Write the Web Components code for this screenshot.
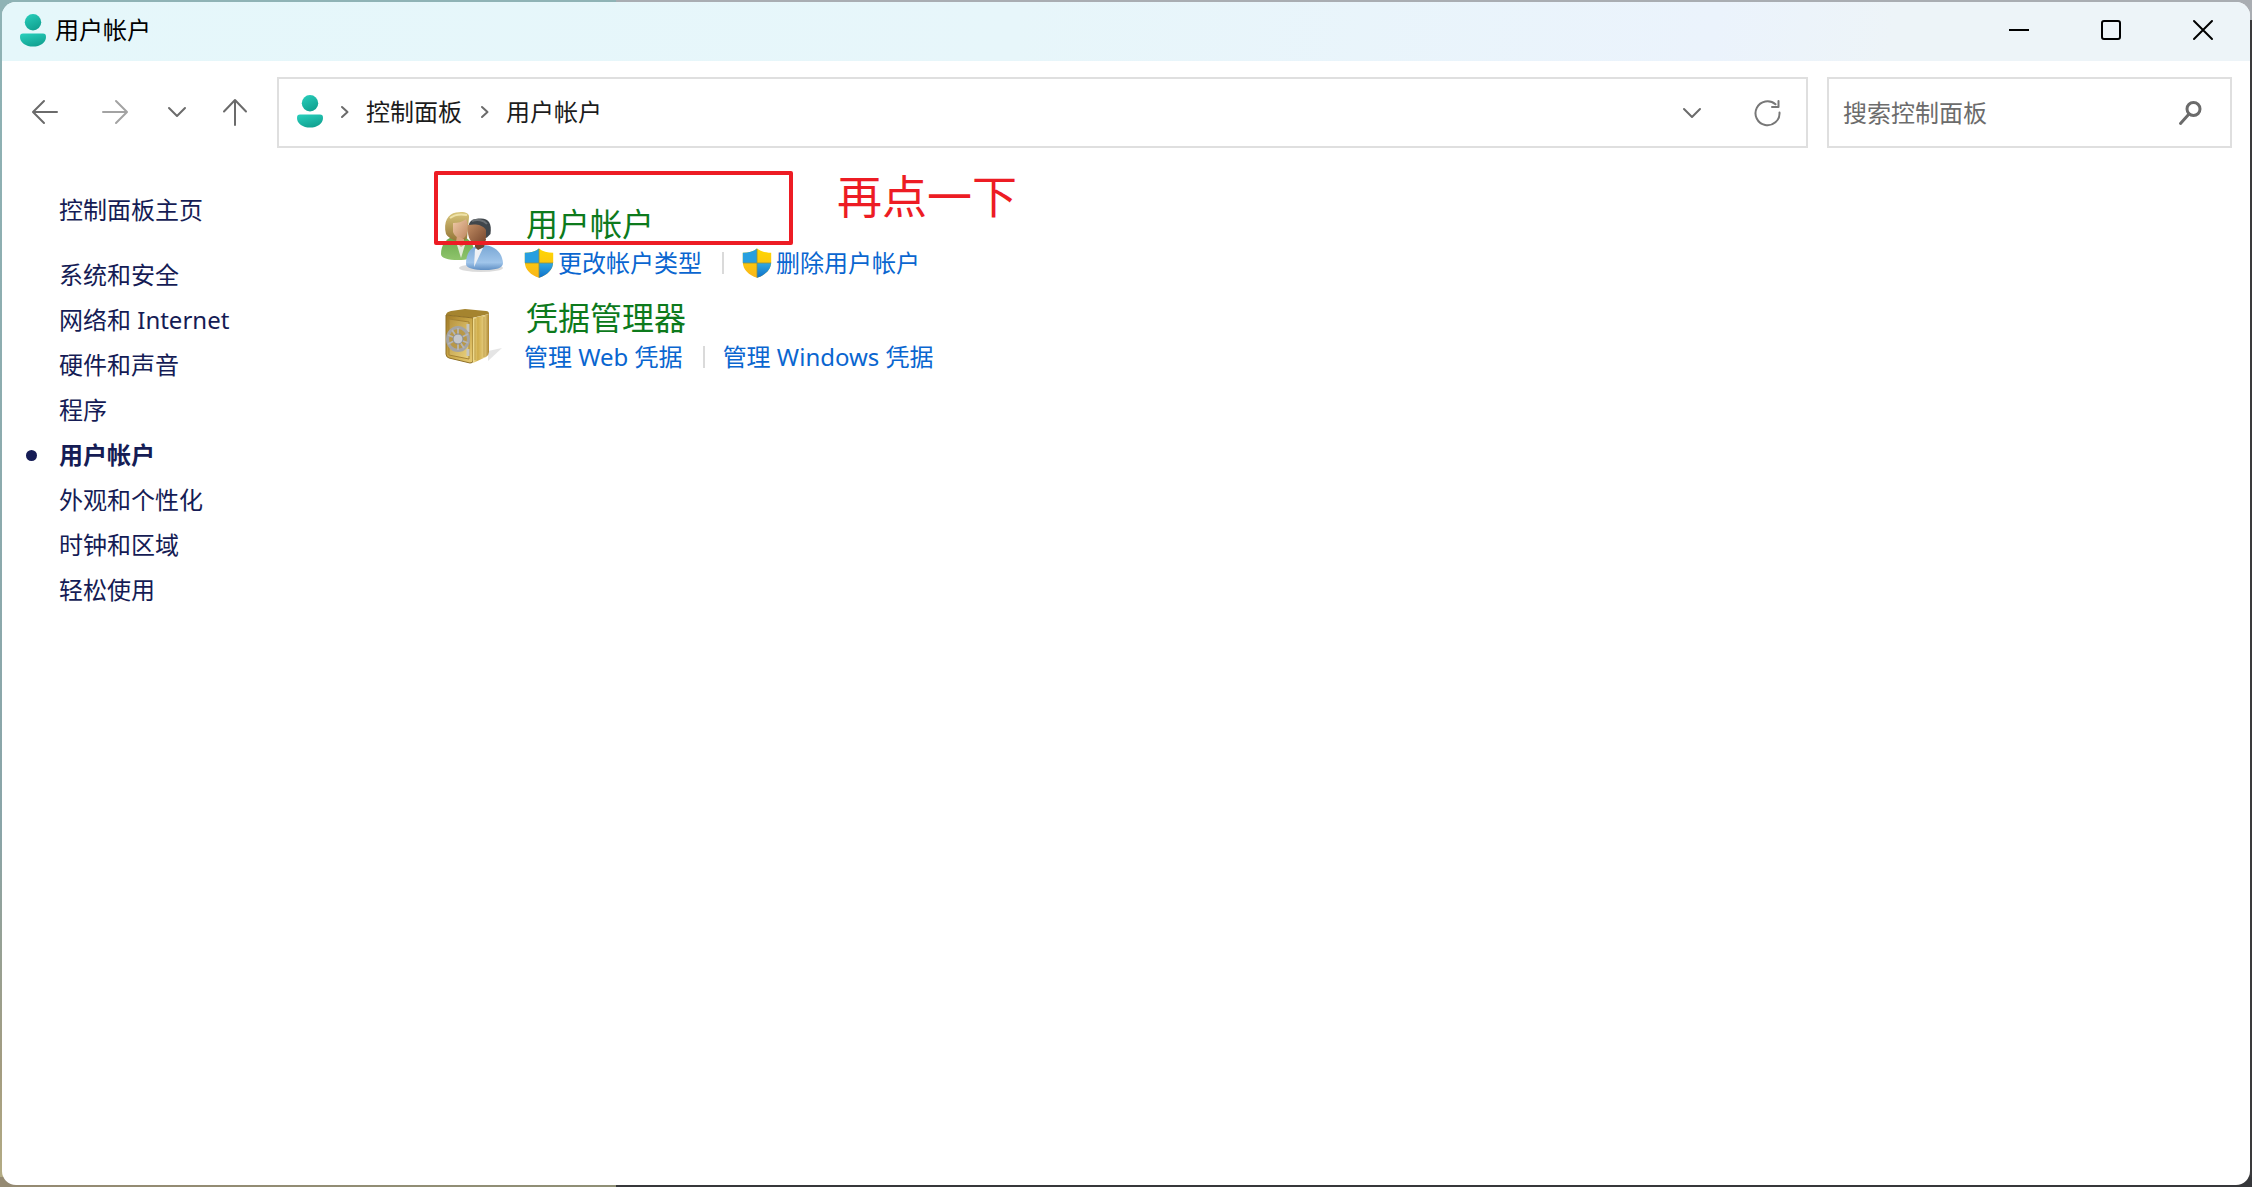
<!DOCTYPE html>
<html lang="zh-CN">
<head>
<meta charset="utf-8">
<title>用户帐户</title>
<style>
  html, body { margin: 0; height: 100%; }
  body {
    font-family: "Noto Sans", "Noto Sans CJK SC", sans-serif;
    font-size: 24px;
    line-height: 32px;
    background:
      linear-gradient(90deg, #8fb3b5 0 616px, #a9adb2 616px 100%) top / 100% 20px no-repeat,
      linear-gradient(90deg, #958a72, #8f8f76 616px, #36373a 616px) bottom / 100% 10px no-repeat,
      linear-gradient(90deg, transparent 50%, #3a3a3c 50%),
      linear-gradient(180deg, #8fb3b5, #8aa5a8 70%, #a39c80 90%, #b5ad84);
  }
</style>
</head>
<body>
<cp-window>
  <cp-titlebar slot="title">用户帐户</cp-titlebar>
  <cp-navbar slot="nav"></cp-navbar>
  <cp-sidebar slot="side">
    <cp-side-link home>控制面板主页</cp-side-link>
    <cp-side-link>系统和安全</cp-side-link>
    <cp-side-link>网络和 Internet</cp-side-link>
    <cp-side-link>硬件和声音</cp-side-link>
    <cp-side-link>程序</cp-side-link>
    <cp-side-link current>用户帐户</cp-side-link>
    <cp-side-link>外观和个性化</cp-side-link>
    <cp-side-link>时钟和区域</cp-side-link>
    <cp-side-link>轻松使用</cp-side-link>
  </cp-sidebar>
  <cp-category>
    <cp-icon slot="icon" name="users"></cp-icon>
    <span slot="heading">用户帐户</span>
    <cp-task shield>更改帐户类型</cp-task>
    <cp-task shield>删除用户帐户</cp-task>
  </cp-category>
  <cp-category>
    <cp-icon slot="icon" name="safe"></cp-icon>
    <span slot="heading">凭据管理器</span>
    <cp-task>管理 Web 凭据</cp-task>
    <cp-task>管理 Windows 凭据</cp-task>
  </cp-category>
  <cp-callout slot="callout">再点一下</cp-callout>
</cp-window>

<script>
const line = (w, h, d, color = '#6b6b6b', sw = 2) =>
  `<svg width="${w}" height="${h}" viewBox="0 0 ${w} ${h}" fill="none" stroke="${color}" stroke-width="${sw}" stroke-linecap="round" stroke-linejoin="round">${d}</svg>`;

const ICONS = {
  person: `<svg width="26" height="33" viewBox="0 0 26 33"><defs>
    <linearGradient id="h" x1="0" y1="0" x2=".5" y2="1"><stop offset="0" stop-color="#29d0bd"/><stop offset="1" stop-color="#12a392"/></linearGradient></defs>
    <circle cx="13" cy="8.2" r="8.2" fill="url(#h)"/>
    <path d="M3 19.500h20q3 0 3 3.200C26 29 20 32.500 13 32.500S0 29 0 22.700q0-3.200 3-3.200z" fill="url(#h)"/></svg>`,
  back: line(28, 28, '<path d="M26 14H2.500M13 3L2 14l11 11"/>'),
  forward: line(28, 28, '<path d="M2 14h23.500M15 3l11 11-11 11"/>', '#a3a3a3'),
  down: line(20, 20, '<path d="M2 6l8 8 8-8"/>'),
  up: line(28, 28, '<path d="M14 27V2.500M3 13.500L14 2l11 11.500"/>'),
  crumb: line(10, 16, '<path d="M2 3l5.500 5L2 13"/>'),
  refresh: line(28, 28, '<path d="M25.500 13.500A12 12 0 1 1 21.500 5.300M24.500 2v6h-6.500"/>', '#777'),
  search: line(24, 26, '<circle cx="15.500" cy="9" r="6.500" stroke-width="3"/><path d="M11 14L2.500 23.500" stroke-width="3"/>'),
  min: line(22, 22, '<path d="M1 11h20" stroke-linecap="butt"/>', '#000'),
  max: line(22, 22, '<rect x="2" y="2" width="18" height="18" rx="2"/>', '#000'),
  close: line(22, 22, '<path d="M2 2l18 18M20 2L2 20"/>', '#000'),
  shield: `<svg width="30" height="30" viewBox="0 0 30 30"><defs>
    <linearGradient id="y" x1="0" y1="0" x2="0" y2="1"><stop offset="0" stop-color="#ffd800"/><stop offset="1" stop-color="#f9b51c"/></linearGradient>
    <linearGradient id="b" x1="0" y1="0" x2="0" y2="1"><stop offset="0" stop-color="#31a9e3"/><stop offset="1" stop-color="#0f6fc8"/></linearGradient>
    <clipPath id="s"><path d="M15 .5C11.500 3.400 6.500 4.800.8 4.800V14c0 8 6.200 13 14.200 15.800C23 27 29.200 22 29.200 14V4.800C23.500 4.800 18.500 3.400 15 .5z"/></clipPath></defs>
    <g clip-path="url(#s)"><rect width="30" height="30" fill="url(#y)"/><path d="M0 0h15v15H0z" fill="#279fe0"/><path d="M15 15h15v15H15z" fill="url(#b)"/>
    <path d="M15 0v30M0 15h30" stroke="#8a8f4a" stroke-width=".8"/></g></svg>`,
  users: `<svg width="68" height="66" viewBox="0 0 68 66"><defs>
    <linearGradient id="hair" x1="0" y1="0" x2="0" y2="1"><stop offset="0" stop-color="#d9c77c"/><stop offset="1" stop-color="#957638"/></linearGradient>
    <linearGradient id="f1" x1="0" y1="0" x2="1" y2="1"><stop offset="0" stop-color="#f0cba8"/><stop offset="1" stop-color="#bd8661"/></linearGradient>
    <linearGradient id="f2" x1="0" y1="0" x2="1" y2="1"><stop offset="0" stop-color="#c08b62"/><stop offset="1" stop-color="#74452c"/></linearGradient>
    <linearGradient id="g" x1="0" y1="0" x2="0" y2="1"><stop offset="0" stop-color="#69a94b"/><stop offset="1" stop-color="#8fc46c"/></linearGradient>
    <linearGradient id="bl" x1="0" y1="0" x2="0" y2="1"><stop offset="0" stop-color="#78a6d4"/><stop offset=".7" stop-color="#a0c5ea"/><stop offset="1" stop-color="#5f8fc4"/></linearGradient></defs>
    <ellipse cx="43" cy="58" rx="22" ry="4" fill="#888" opacity=".3"/>
    <path d="M3 44c0-9 5-15 11-17h12c7 3 10 8 10 16 0 5-6 7-16 7S3 48 3 44z" fill="url(#g)"/>
    <path d="M19 35l4 13 4-13z" fill="#e4ead8"/>
    <path d="M8 24C5 12 10 4 18 2.500c7-1.500 14 0 13 5l-2 21c-5 4-16 3-21-4.500z" fill="url(#hair)"/>
    <path d="M15 13c5 0 9-1 13-4 3 5 2 16-2 19-4 2-9-1-11-6z" fill="url(#f1)"/>
    <path d="M19 26l7 3v6l-3 2-5-5z" fill="#d3a17a"/>
    <path d="M12 8c5-4 12-4 17-3" fill="none" stroke="#eee2a8" stroke-width="2"/>
    <path d="M28 54c0-11 5-18 14-19 13-1 22 6 23 18 0 5-7 7-18 7s-19-2-19-6z" fill="url(#bl)"/>
    <path d="M37 39l-1 18 9-19z" fill="#eef1f5"/>
    <path d="M37 29h11l-2 8-6 3-3-3z" fill="#70452f"/>
    <path d="M31 17c-1-6 4-8.500 12-8.500s11 5.500 9.500 15.500l-4 4c-4-8-9-10-17.500-11z" fill="#40464b"/>
    <path d="M30 15c7-1 14-1 18 5v8c-3 7-8 7-11 6-6-2-8-10-7-19z" fill="url(#f2)"/>
    <path d="M34 11c5-2 12-1 15 3" fill="none" stroke="#6b7074" stroke-width="2"/></svg>`,
  safe: `<svg width="68" height="66" viewBox="0 -2 68 66"><defs>
    <linearGradient id="fr" x1="0" y1="0" x2="1" y2="1"><stop offset="0" stop-color="#a17b28"/><stop offset=".5" stop-color="#c9a647"/><stop offset="1" stop-color="#e8cc75"/></linearGradient>
    <linearGradient id="sd" x1="0" y1="0" x2="1" y2="0"><stop offset="0" stop-color="#f1df96"/><stop offset=".3" stop-color="#cfac49"/><stop offset=".7" stop-color="#e5cd80"/><stop offset="1" stop-color="#ad8631"/></linearGradient>
    <linearGradient id="dr" x1="0" y1="0" x2="1" y2="1"><stop offset="0" stop-color="#b8943f"/><stop offset="1" stop-color="#e9d17d"/></linearGradient></defs>
    <path d="M50 55l14-13-14 3z" fill="#999" opacity=".25"/>
    <path d="M8 9q0-3 5-4l14-2 21 2q3 0 3 3l-17 4z" fill="#a5842f"/>
    <path d="M8 9l27 3v43q0 2-3 2L11 52q-3-1-3-4z" fill="url(#fr)" stroke="#8f7027"/>
    <path d="M35 12l16-4v38q0 3-3 5l-13 6z" fill="url(#sd)"/>
    <path d="M37 13v41M46 11v40" stroke="#a9832d" opacity=".6"/>
    <path d="M11 13l20 3v37l-20-4z" fill="url(#dr)" stroke="#a58334"/>
    <path d="M30 18v8M30 43v7" stroke="#c5c5c0" stroke-width="3"/>
    <ellipse cx="20" cy="33" rx="10.500" ry="11.500" fill="#b89848" stroke="#a4a4a4" stroke-width="3"/>
    <path d="M20 22v22M10 29l20 8M10 38l20-10M14 24l12 18" stroke="#b5b5b5" stroke-width="1.800"/>
    <circle cx="20" cy="33" r="5" fill="#c5c7ca" stroke="#8a8d90"/></svg>`
};

function define(name, html) {
  const template = document.createElement('template');
  customElements.define(name, class extends HTMLElement {
    constructor() {
      super();
      template.innerHTML = typeof html === 'function' ? html(this) : html;
      this.attachShadow({ mode: 'open' }).append(template.content.cloneNode(true));
    }
  });
}

const button = `button { all: unset; box-sizing: border-box; display: flex; align-items: center; justify-content: center; cursor: default; }
  button:focus-visible { outline: 2px solid #0067c0; }`;

define('cp-icon', el => `<style>:host { display: block; flex: none; } svg { display: block; }</style>${ICONS[el.getAttribute('name')]}`);

define('cp-window', `<style>
  :host { display: flex; flex-direction: column; box-sizing: border-box; height: 100vh; padding: 2px; }
  .frame { flex: 1; display: flex; flex-direction: column; background: #fff; border-radius: 14px; overflow: hidden; }
  .body { flex: 1; display: flex; position: relative; }
  main { flex: 1; display: flex; flex-direction: column; gap: 16px; padding-top: 38px; }
</style>
<div class="frame"><slot name="title"></slot><slot name="nav"></slot>
<div class="body"><slot name="side"></slot><main><slot></slot></main><slot name="callout"></slot></div></div>`);

define('cp-titlebar', `<style>
  :host { display: flex; align-items: center; box-sizing: border-box; height: 59px; padding-bottom: 3px; color: #000;
    background: linear-gradient(100deg, #e5f7fa, #e7f6fa 45%, #ebf3fc 76%, #edf4f8 84%, #edf4f8); }
  .label { flex: 1; display: flex; align-items: center; gap: 9px; padding-left: 18px; }
  ${button}
  button { width: 92px; height: 56px; }
  button:last-child { margin-right: 1px; }
</style>
<div class="label"><cp-icon name="person"></cp-icon><span><slot></slot></span></div>
<button aria-label="最小化"><cp-icon name="min"></cp-icon></button>
<button aria-label="最大化"><cp-icon name="max"></cp-icon></button>
<button aria-label="关闭"><cp-icon name="close"></cp-icon></button>`);

define('cp-navbar', `<style>
  :host { display: flex; align-items: flex-start; padding: 16px 18px 16px 8px; }
  ${button}
  .tool { width: 70px; height: 70px; }
  .recent { width: 54px; }
  .up { width: 61px; }
  .box { box-sizing: border-box; height: 71px; display: flex; align-items: center; border: 2px solid #dfdfdf; }
  .address { flex: 1; margin: 0 19px 0 12px; padding-left: 18px; color: #1c1c1c; }
  nav { flex: 1; display: flex; align-items: center; padding-bottom: 2px; }
  nav a { color: inherit; text-decoration: none; }
  nav cp-icon:first-child { margin-right: 17px; }
  nav a + cp-icon { margin-left: 18px; }
  nav a { margin-left: 16px; }
  .address button { width: 76px; height: 66px; }
  .search { width: 405px; padding: 0 28px 0 14px; }
  input { all: unset; flex: 1; min-width: 0; font: inherit; color: #333; }
  input::placeholder { color: #6c6c6c; opacity: 1; }
</style>
<button class="tool" aria-label="后退"><cp-icon name="back"></cp-icon></button>
<button class="tool" aria-label="前进" disabled><cp-icon name="forward"></cp-icon></button>
<button class="tool recent" aria-label="最近浏览的位置"><cp-icon name="down"></cp-icon></button>
<button class="tool up" aria-label="上移"><cp-icon name="up"></cp-icon></button>
<div class="box address">
  <nav><cp-icon name="person"></cp-icon><cp-icon name="crumb"></cp-icon><a href="#home">控制面板</a><cp-icon name="crumb"></cp-icon><a href="#users">用户帐户</a></nav>
  <button aria-label="以前的位置"><cp-icon name="down"></cp-icon></button>
  <button aria-label="刷新"><cp-icon name="refresh"></cp-icon></button>
</div>
<div class="box search"><input type="text" aria-label="搜索控制面板" placeholder="搜索控制面板"><cp-icon name="search"></cp-icon></div>`);

define('cp-sidebar', `<style>
  :host { display: flex; flex-direction: column; gap: 13px; width: 436px; padding-top: 30px; box-sizing: border-box; }
</style><slot></slot>`);

define('cp-side-link', `<style>
  :host { display: flex; align-items: center; padding-left: 24px; }
  :host([home]) { margin-bottom: 20px; }
  :host([current]) { font-weight: 700; }
  i { width: 11px; height: 11px; margin-right: 22px; border-radius: 50%; }
  :host([current]) i { background: #151c55; }
  a { color: #151c55; text-decoration: none; }
</style><i></i><a href="#"><slot></slot></a>`);

define('cp-category', `<style>
  :host { display: flex; gap: 20px; }
  h2 { margin: 0; font-size: 32px; line-height: 44px; font-weight: 400; }
  h2 a { color: #0d7a1c; text-decoration: none; }
  section { display: flex; flex-direction: column; }
  .icon { height: 78px; box-sizing: border-box; padding-top: 8px; }
  .tasks { display: flex; height: 34px; align-items: center; margin-left: -2px; }
</style>
<div class="icon"><slot name="icon"></slot></div>
<section><h2><a href="#"><slot name="heading"></slot></a></h2><div class="tasks"><slot></slot></div></section>`);

define('cp-task', el => `<style>
  :host { display: flex; align-items: center; }
  :host(:not(:last-child))::after { content: ""; width: 2px; height: 22px; margin: 0 18px 0 20px; background: #dadada; }
  a { display: flex; align-items: center; gap: 4px; color: #0a66d0; text-decoration: none; }
</style><a href="#">${el.hasAttribute('shield') ? '<cp-icon name="shield"></cp-icon>' : ''}<span><slot></slot></span></a>`);

define('cp-callout', `<style>
  :host { position: absolute; left: 432px; top: 7px; display: flex; gap: 44px; color: #ed1c24; font-size: 45px; line-height: 52px; pointer-events: none; }
  .mark { box-sizing: border-box; width: 359px; height: 74px; border: 4px solid #ed1c24; border-radius: 2px; }
</style><div class="mark"></div><span><slot></slot></span>`);
</script>
</body>
</html>
